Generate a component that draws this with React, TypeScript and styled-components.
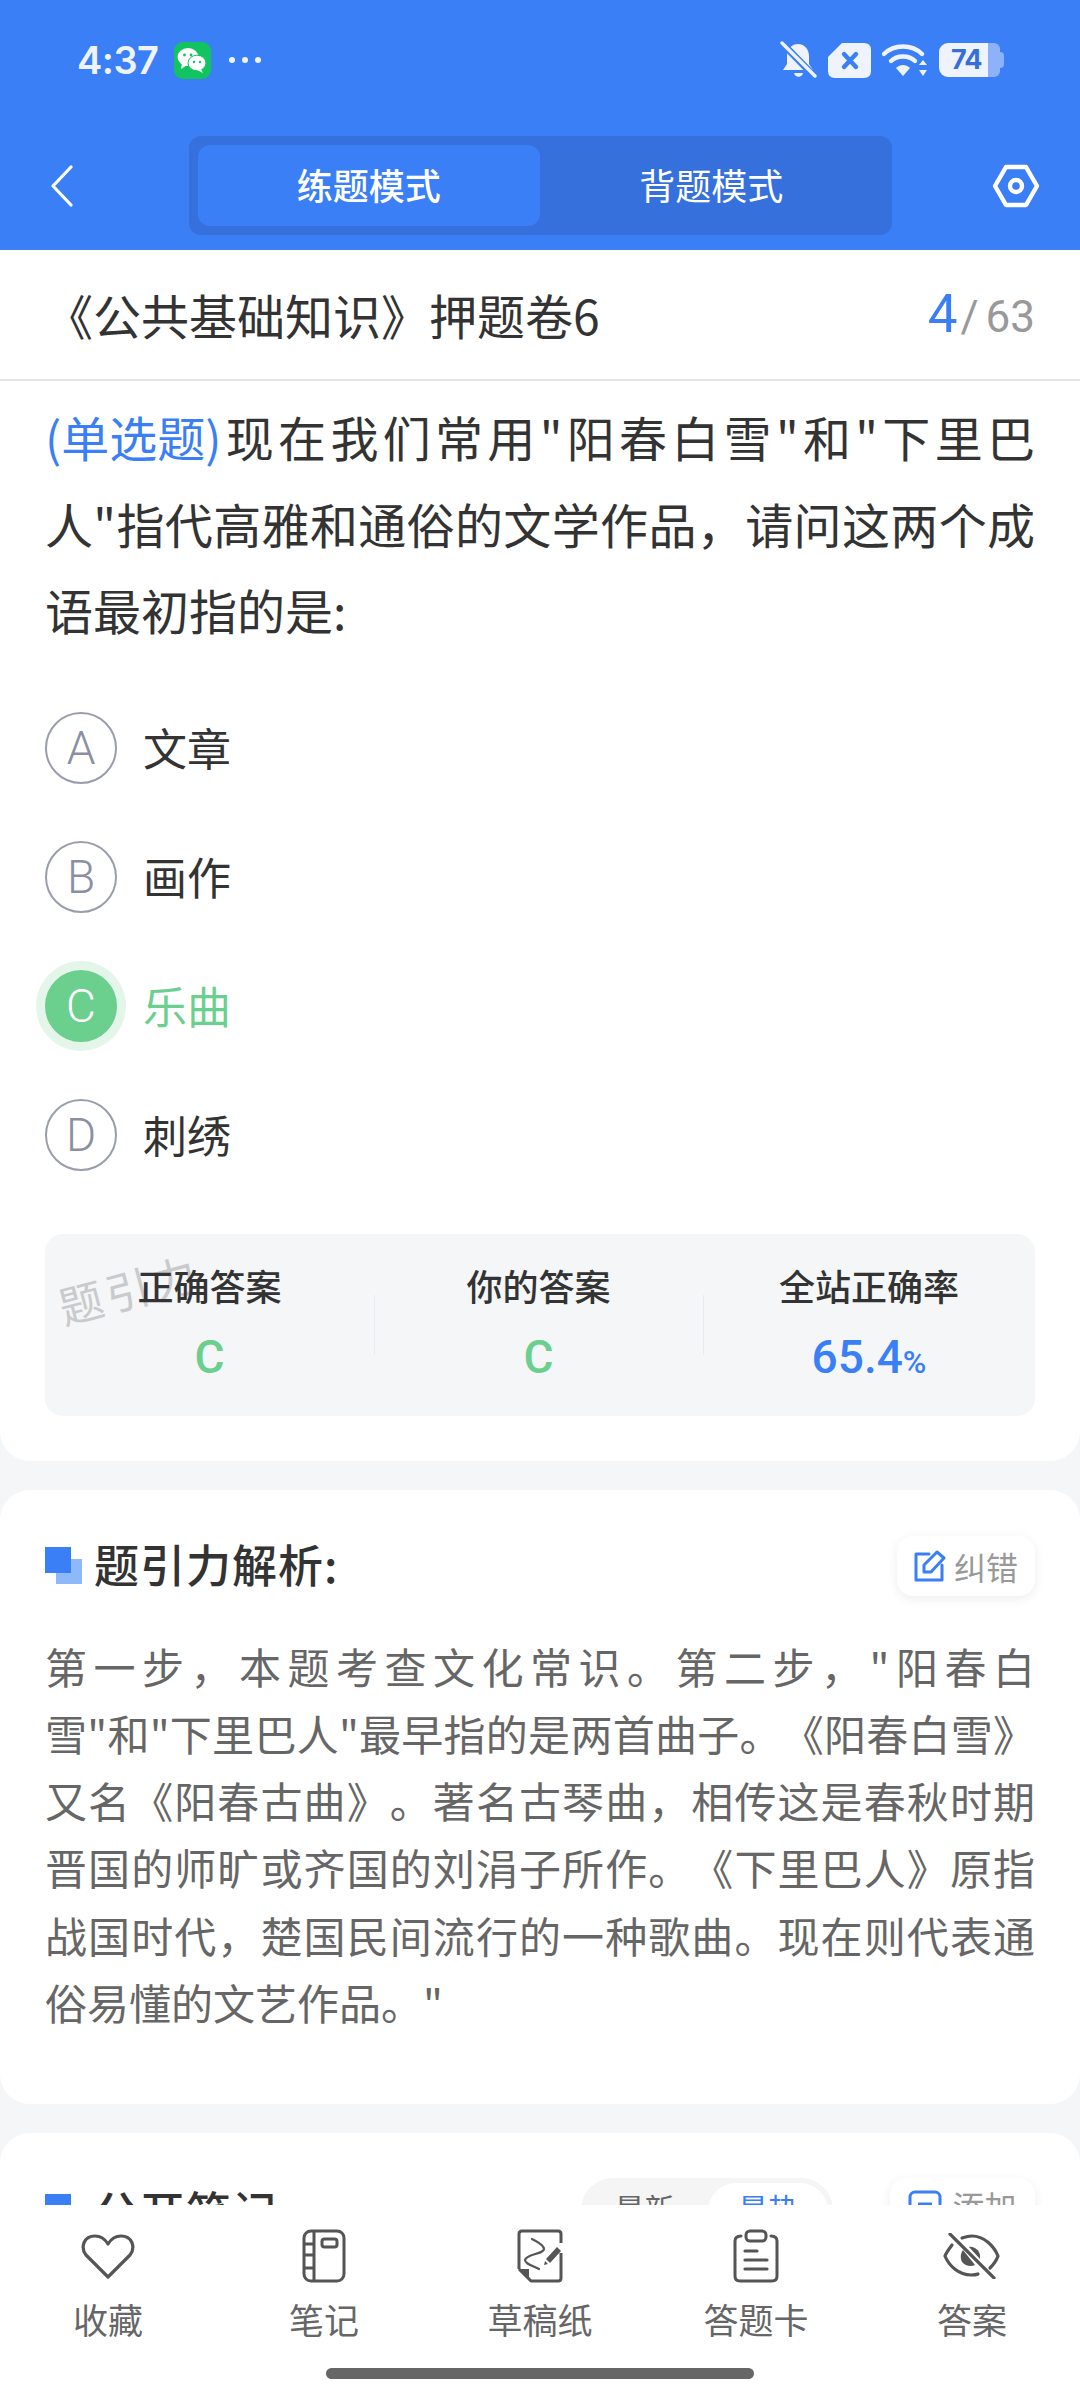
import styled, { createGlobalStyle } from "styled-components";

const BLUE = "#3b7ff7";
const GREEN = "#6bcf8e";
const PAGE = "#f4f6f8";
const ICON = "#555555";

const GlobalStyle = createGlobalStyle`
  html, body {
    margin: 0;
    padding: 0;
    background: ${PAGE};
  }
  body {
    font-family: "Noto Sans CJK SC", "Noto Sans", sans-serif;
    text-spacing-trim: space-all;
  }
  * {
    box-sizing: border-box;
  }
`;

const options = [
  { key: "A", text: "文章", picked: false },
  { key: "B", text: "画作", picked: false },
  { key: "C", text: "乐曲", picked: true },
  { key: "D", text: "刺绣", picked: false },
];

const analysisLines = [
  '第一步，本题考查文化常识。第二步，"阳春白',
  '雪"和"下里巴人"最早指的是两首曲子。《阳春白雪》',
  "又名《阳春古曲》。著名古琴曲，相传这是春秋时期",
  "晋国的师旷或齐国的刘涓子所作。《下里巴人》原指",
  "战国时代，楚国民间流行的一种歌曲。现在则代表通",
];

const HeartIcon = () => (
  <svg width="54" height="47" viewBox="0 0 54 47" fill="none" stroke={ICON} strokeWidth="3.2" strokeLinejoin="round">
    <path d="M27 44 L5 22 C-1 14 3 3 14 3 C20 3 24 6 27 11 C30 6 34 3 40 3 C51 3 55 14 49 22 Z" />
  </svg>
);

const NotebookIcon = () => (
  <svg width="44" height="54" viewBox="0 0 44 54" fill="none" stroke={ICON} strokeWidth="3" strokeLinejoin="round">
    <rect x="2" y="2" width="40" height="50" rx="7" />
    <path d="M12 2 V52 M2 15 H12 M2 26 H12 M2 39 H12" />
    <rect x="20" y="10" width="15" height="8" rx="2.5" />
  </svg>
);

const DraftIcon = () => (
  <svg width="46" height="54" viewBox="0 0 46 54" fill="none" stroke={ICON} strokeWidth="3" strokeLinejoin="round">
    <path d="M2 40 V5 Q2 2 5 2 H41 Q44 2 44 5 V14 M44 24 V49 Q44 52 41 52 H14 L2 40" />
    <path d="M2 40 H12 V50 Z" fill={ICON} stroke="none" />
    <path d="M15 10 C21 13 27 17 27 20 C27 25 9 25 8 31 C8 35 16 37 22 40" strokeWidth="2.2" strokeLinecap="round" />
    <path d="M29 30 L40 18 L44 22 L33 34 Z M27 36 L28 32 L31 35 Z" fill={ICON} stroke="none" />
  </svg>
);

const ClipboardIcon = () => (
  <svg width="46" height="54" viewBox="0 0 46 54" fill="none" stroke={ICON} strokeWidth="3" strokeLinecap="round" strokeLinejoin="round">
    <path d="M8 7 Q2 7 2 12 V47 Q2 52 7 52 H39 Q44 52 44 47 V12 Q44 7 38 7" />
    <rect x="13" y="2" width="20" height="10" rx="4" />
    <path d="M12 22 H24 M12 31 H34 M12 40 H34" strokeWidth="3.2" />
  </svg>
);

const EyeOffIcon = () => (
  <svg width="58" height="46" viewBox="0 0 58 46" fill="none" stroke={ICON} strokeWidth="3.2" strokeLinecap="round">
    <path d="M9 12 C6 16 3 20 2 23 C6 33 16 42 28 42 C31 42 33 42 35 41" />
    <path d="M19 5 C22 4 25 3 29 3 C41 3 51 13 55 23 C54 26 51 31 47 35" />
    <path d="M7 1 L51 45" />
    <path d="M20 17 C17 21 17 27 20 30 C23 33 28 34 32 32 Z" fill={ICON} stroke="none" />
    <path d="M26 14 C31 13 36 17 37 22 L37 26 Z" fill={ICON} stroke="none" />
  </svg>
);

const tools = [
  { label: "收藏", icon: <HeartIcon /> },
  { label: "笔记", icon: <NotebookIcon /> },
  { label: "草稿纸", icon: <DraftIcon /> },
  { label: "答题卡", icon: <ClipboardIcon /> },
  { label: "答案", icon: <EyeOffIcon /> },
];

export default function App() {
  return (
    <>
      <GlobalStyle />
      <Screen>
        <Header>
          <StatusBar>
            <StatusLeft>
              <Time>4:37</Time>
              <WeChatBadge>
                <svg width="30" height="26" viewBox="0 0 30 26">
                  <ellipse cx="11" cy="10" rx="10.5" ry="9" fill="#fff" />
                  <path d="M5 16 L4 22 L10 18 Z" fill="#fff" />
                  <ellipse cx="20" cy="16" rx="9" ry="7.8" fill="#fff" stroke="#12c45f" strokeWidth="1" />
                  <path d="M24 22 L26 26 L20 23 Z" fill="#fff" />
                  <circle cx="7.5" cy="8" r="1.4" fill="#12c45f" />
                  <circle cx="14" cy="8" r="1.4" fill="#12c45f" />
                  <circle cx="17" cy="15" r="1.2" fill="#12c45f" />
                  <circle cx="23" cy="15" r="1.2" fill="#12c45f" />
                </svg>
              </WeChatBadge>
              <Dots>
                <i />
                <i />
                <i />
              </Dots>
            </StatusLeft>
            <StatusRight>
              <svg width="37" height="38" viewBox="0 0 37 38" fill="none">
                <path d="M18 3 C25 3 29 9 29 15 V23 L33 29 H3 L7 23 V15 C7 9 11 3 18 3 Z" fill="#eef3fe" />
                <path d="M14 32 H23 C22 37 15 37 14 32 Z" fill="#eef3fe" />
                <path d="M1 1 L36 37" stroke={BLUE} strokeWidth="7" />
                <path d="M2 2 L35 35" stroke="#eef3fe" strokeWidth="3.4" strokeLinecap="round" />
              </svg>
              <svg width="43" height="35" viewBox="0 0 43 35">
                <path d="M14 0 H36 Q43 0 43 7 V28 Q43 35 36 35 H7 Q0 35 0 28 V14 Z" fill="#eef3fe" />
                <path d="M16 11 L28 24 M28 11 L16 24" stroke={BLUE} strokeWidth="4.4" strokeLinecap="round" />
              </svg>
              <svg width="46" height="34" viewBox="0 0 46 34" fill="none" stroke="#eef3fe" strokeLinecap="round">
                <path d="M2 11 C12 1 30 1 40 11" strokeWidth="4.4" />
                <path d="M9 18 C15 12 27 12 33 18" strokeWidth="4.4" />
                <path d="M14 25 L21 33 L28 25 C24 21 18 21 14 25 Z" fill="#eef3fe" stroke="none" />
                <path d="M37 22 L41 17 L45 22 Z M37 27 L45 27 L41 33 Z" fill="#eef3fe" stroke="none" />
              </svg>
              <Battery>
                <BatteryBody>74</BatteryBody>
                <BatteryCap />
              </Battery>
            </StatusRight>
          </StatusBar>
          <NavBar>
            <svg width="24" height="42" viewBox="0 0 24 42" fill="none" stroke="#fff" strokeWidth="3.2" strokeLinecap="round" strokeLinejoin="round">
              <path d="M21 2 L3 21 L21 40" />
            </svg>
            <ModeSwitch>
              <ModeTab $active>练题模式</ModeTab>
              <ModeTab>背题模式</ModeTab>
            </ModeSwitch>
            <svg width="48" height="44" viewBox="0 0 48 44" fill="none" stroke="#fff" strokeWidth="4.4" strokeLinejoin="round">
              <path d="M14 3 H34 L45 22 L34 41 H14 L3 22 Z" />
              <circle cx="24" cy="22" r="6" />
            </svg>
          </NavBar>
        </Header>

        <Scroller>
          <QuestionCard>
            <TitleRow>
              <PaperTitle>《公共基础知识》押题卷6</PaperTitle>
              <Counter>
                <CurrentNo>4</CurrentNo>
                <Total>/ 63</Total>
              </Counter>
            </TitleRow>
            <Stem>
              <FullLine>
                <StemType>(单选题)</StemType>现在我们常用"阳春白雪"和"下里巴
              </FullLine>
              <FullLine>人"指代高雅和通俗的文学作品，请问这两个成</FullLine>
              语最初指的是:
            </Stem>
            <OptionList>
              {options.map((o) => (
                <OptionRow key={o.key}>
                  <OptionMark $picked={o.picked}>{o.key}</OptionMark>
                  <OptionText $picked={o.picked}>{o.text}</OptionText>
                </OptionRow>
              ))}
            </OptionList>
            <StatsPanel>
              <Watermark>题引力</Watermark>
              <StatCell>
                <StatLabel>正确答案</StatLabel>
                <StatValue>C</StatValue>
              </StatCell>
              <StatCell $divided>
                <StatLabel>你的答案</StatLabel>
                <StatValue>C</StatValue>
              </StatCell>
              <StatCell $divided>
                <StatLabel>全站正确率</StatLabel>
                <StatValue $blue>
                  65.4<small>%</small>
                </StatValue>
              </StatCell>
            </StatsPanel>
          </QuestionCard>

          <AnalysisCard>
            <SectionHead>
              <SectionTitle>
                <Squares />
                <TitleText>题引力解析:</TitleText>
              </SectionTitle>
              <GhostButton>
                <svg width="32" height="32" viewBox="0 0 32 32" fill="none" stroke={BLUE} strokeWidth="3" strokeLinecap="round" strokeLinejoin="round">
                  <path d="M15 4 H2 V30 H28 V15" />
                  <path d="M10 22 V15 L23 2 L30 8 L17 22 Z" />
                </svg>
                纠错
              </GhostButton>
            </SectionHead>
            <AnalysisText>
              {analysisLines.map((line) => (
                <FullLine key={line}>{line}</FullLine>
              ))}
              俗易懂的文艺作品。"
            </AnalysisText>
          </AnalysisCard>

          <NotesCard>
            <NotesHead>
              <SectionTitle>
                <Squares />
                <TitleText>公开笔记:</TitleText>
              </SectionTitle>
              <NotesActions>
                <SortSwitch>
                  <SortTab>最新</SortTab>
                  <SortTab $active>最热</SortTab>
                </SortSwitch>
                <AddButton>
                  <svg width="34" height="30" viewBox="0 0 34 30" fill="none" stroke={BLUE} strokeWidth="3">
                    <rect x="2" y="2" width="30" height="26" rx="5" />
                    <path d="M10 14 H24" />
                  </svg>
                  添加
                </AddButton>
              </NotesActions>
            </NotesHead>
          </NotesCard>
        </Scroller>

        <BottomBar>
          <ToolRow>
            {tools.map((t) => (
              <Tool key={t.label}>
                <ToolIcon>{t.icon}</ToolIcon>
                <ToolLabel>{t.label}</ToolLabel>
              </Tool>
            ))}
          </ToolRow>
          <HomeIndicator />
        </BottomBar>
      </Screen>
    </>
  );
}

const Screen = styled.div`
  width: 1080px;
  height: 2400px;
  display: flex;
  flex-direction: column;
  overflow: hidden;
  background: ${PAGE};
`;

const Header = styled.header`
  height: 250px;
  flex: none;
  background: ${BLUE};
`;

const StatusBar = styled.div`
  height: 136px;
  padding: 38px 76px 0 77px;
  display: flex;
  justify-content: space-between;
  align-items: flex-start;
`;

const StatusLeft = styled.div`
  display: flex;
  align-items: center;
  height: 44px;
`;

const Time = styled.span`
  font-family: Inter, sans-serif;
  font-size: 38px;
  font-weight: 600;
  letter-spacing: -0.5px;
  color: #eef3fe;
`;

const WeChatBadge = styled.span`
  width: 37px;
  height: 37px;
  margin-left: 15px;
  border-radius: 9px;
  background: #12c45f;
  display: flex;
  align-items: center;
  justify-content: center;
`;

const Dots = styled.span`
  display: flex;
  gap: 7px;
  margin-left: 18px;

  i {
    width: 6px;
    height: 6px;
    border-radius: 50%;
    background: #eef3fe;
  }
`;

const StatusRight = styled.div`
  display: flex;
  align-items: center;
  gap: 11px;
  height: 44px;
`;

const Battery = styled.div`
  display: flex;
  align-items: center;
`;

const BatteryBody = styled.div`
  width: 61px;
  height: 34px;
  border-radius: 9px 6px 6px 9px;
  padding-left: 12px;
  background: linear-gradient(to right, #eef3fe 49px, #8db2fa 49px);
  font-family: Inter, sans-serif;
  font-size: 27px;
  font-weight: 700;
  line-height: 34px;
  letter-spacing: -1px;
  color: #3570d8;
`;

const BatteryCap = styled.div`
  width: 4px;
  height: 16px;
  border-radius: 0 4px 4px 0;
  background: #8db2fa;
`;

const NavBar = styled.div`
  height: 99px;
  padding: 0 40px 0 50px;
  display: flex;
  align-items: center;
  justify-content: space-between;
`;

const ModeSwitch = styled.div`
  width: 703px;
  height: 99px;
  padding: 9px;
  margin-left: 14px;
  border-radius: 12px;
  background: #3670dc;
  display: flex;
`;

const ModeTab = styled.div<{ $active?: boolean }>`
  flex: 1;
  display: flex;
  align-items: center;
  justify-content: center;
  padding-bottom: 4px;
  border-radius: 12px;
  background: ${({ $active }) => ($active ? BLUE : "transparent")};
  color: #fff;
  font-size: 36px;
  font-weight: ${({ $active }) => ($active ? 500 : 400)};
`;

const Scroller = styled.main`
  flex: 1;
  min-height: 0;
  overflow: hidden;
  display: flex;
  flex-direction: column;
  gap: 29px;
`;

const QuestionCard = styled.section`
  flex: none;
  background: #fff;
  border-radius: 0 0 30px 30px;
  padding-bottom: 45px;
`;

const TitleRow = styled.div`
  height: 131px;
  padding: 0 45px 2px;
  display: flex;
  align-items: center;
  justify-content: space-between;
  border-bottom: 2px solid #e4e4e4;
`;

const PaperTitle = styled.h1`
  margin: 0;
  font-size: 48px;
  font-weight: 400;
  color: #333;
`;

const Counter = styled.div`
  display: flex;
  align-items: baseline;
  font-family: Roboto, sans-serif;
`;

const CurrentNo = styled.span`
  font-size: 53px;
  font-weight: 400;
  color: ${BLUE};
`;

const Total = styled.span`
  margin-left: 3px;
  font-size: 44px;
  word-spacing: -4px;
  color: #999;
`;

const Stem = styled.div`
  margin: 12px 45px 0;
  font-size: 48px;
  line-height: 86.5px;
  color: #333;
`;

const FullLine = styled.span`
  display: block;
  text-align: justify;
  text-align-last: justify;
`;

const StemType = styled.span`
  display: inline-block;
  color: ${BLUE};
`;

const OptionList = styled.div`
  margin: 31px 45px 0;
`;

const OptionRow = styled.div`
  height: 129px;
  display: flex;
  align-items: center;
  gap: 26px;
`;

const OptionMark = styled.div<{ $picked?: boolean }>`
  width: 72px;
  height: 72px;
  flex: none;
  border-radius: 50%;
  display: flex;
  align-items: center;
  justify-content: center;
  font-family: Roboto, sans-serif;
  font-size: 46px;
  font-weight: 300;
  border: 2px solid ${({ $picked }) => ($picked ? GREEN : "#9a9dac")};
  color: ${({ $picked }) => ($picked ? "#fff" : "#8b8fa3")};
  background: ${({ $picked }) => ($picked ? GREEN : "transparent")};
  box-shadow: ${({ $picked }) => ($picked ? "0 0 0 9px #e4f6ea" : "none")};
`;

const OptionText = styled.div<{ $picked?: boolean }>`
  margin-bottom: 3px;
  font-size: 44px;
  color: ${({ $picked }) => ($picked ? GREEN : "#333")};
`;

const StatsPanel = styled.div`
  position: relative;
  height: 182px;
  margin: 34px 45px 0;
  border-radius: 18px;
  background: ${PAGE};
  display: grid;
  grid-template-columns: 329px 329px 332px;
`;

const Watermark = styled.div`
  position: absolute;
  left: 12px;
  top: 22px;
  font-size: 44px;
  letter-spacing: 4px;
  color: #c9cacc;
  transform: rotate(-15deg);
`;

const StatCell = styled.div<{ $divided?: boolean }>`
  position: relative;
  padding-top: 26px;
  display: flex;
  flex-direction: column;
  align-items: center;
  gap: 20px;

  &::before {
    content: "";
    display: ${({ $divided }) => ($divided ? "block" : "none")};
    position: absolute;
    left: 0;
    top: 61px;
    height: 60px;
    width: 1px;
    background: #e9ebee;
  }
`;

const StatLabel = styled.div`
  position: relative;
  font-size: 36px;
  font-weight: 500;
  line-height: 50px;
  color: #333;
`;

const StatValue = styled.div<{ $blue?: boolean }>`
  font-family: Roboto, sans-serif;
  font-size: 46px;
  font-weight: 500;
  line-height: 54px;
  color: ${({ $blue }) => ($blue ? BLUE : GREEN)};

  small {
    font-size: 32px;
  }
`;

const AnalysisCard = styled.section`
  flex: none;
  height: 614px;
  padding: 46px 45px 0;
  border-radius: 30px;
  background: #fff;
`;

const SectionHead = styled.div`
  height: 60px;
  display: flex;
  align-items: center;
  justify-content: space-between;
`;

const SectionTitle = styled.h2`
  margin: 0;
  display: flex;
  align-items: center;
  font-size: 45px;
  font-weight: 500;
  letter-spacing: 1px;
  color: #333;
`;

const TitleText = styled.span`
  margin-bottom: 4px;
`;

const Squares = styled.span`
  position: relative;
  width: 37px;
  height: 37px;
  margin-right: 12px;
  flex: none;
  background: linear-gradient(#8db9fa, #8db9fa) 11px 12px / 26px 25px no-repeat;

  &::before {
    content: "";
    position: absolute;
    left: 0;
    top: 0;
    width: 26px;
    height: 26px;
    background: ${BLUE};
  }
`;

const GhostButton = styled.div`
  width: 138px;
  height: 60px;
  border-radius: 16px;
  background: #fff;
  box-shadow: 0 3px 12px rgba(0, 0, 0, 0.07);
  display: flex;
  align-items: center;
  justify-content: center;
  gap: 8px;
  font-size: 32px;
  color: #999;
`;

const AnalysisText = styled.div`
  margin-top: 36px;
  font-size: 42px;
  line-height: 67.3px;
  color: #666;
`;

const NotesCard = styled.section`
  flex: none;
  height: 300px;
  padding: 45px 45px 0;
  border-radius: 30px;
  background: #fff;
`;

const NotesHead = styled.div`
  display: flex;
  align-items: flex-start;
  justify-content: space-between;
`;

const NotesActions = styled.div`
  display: flex;
  gap: 57px;
`;

const SortSwitch = styled.div`
  width: 252px;
  height: 64px;
  padding: 5px 5px 0 0;
  border-radius: 32px;
  background: #f5f5f5;
  display: flex;
`;

const SortTab = styled.div<{ $active?: boolean }>`
  display: flex;
  flex: ${({ $active }) => ($active ? "none" : "1")};
  width: ${({ $active }) => ($active ? "120px" : "auto")};
  align-items: center;
  justify-content: center;
  padding-bottom: 10px;
  border-radius: 28px;
  font-size: 30px;
  background: ${({ $active }) => ($active ? "#fff" : "transparent")};
  color: ${({ $active }) => ($active ? BLUE : "#666")};
`;

const AddButton = styled.div`
  width: 145px;
  height: 62px;
  padding-bottom: 8px;
  border-radius: 16px;
  background: #fff;
  box-shadow: 0 3px 12px rgba(0, 0, 0, 0.07);
  display: flex;
  align-items: center;
  justify-content: center;
  gap: 10px;
  font-size: 32px;
  color: #999;
`;

const BottomBar = styled.nav`
  height: 195px;
  flex: none;
  background: #fff;
  position: relative;
`;

const ToolRow = styled.div`
  display: grid;
  grid-template-columns: repeat(5, 216px);
`;

const Tool = styled.div`
  display: flex;
  flex-direction: column;
  align-items: center;
`;

const ToolIcon = styled.div`
  height: 54px;
  margin-top: 24px;
  display: flex;
  align-items: center;
  justify-content: center;
`;

const ToolLabel = styled.div`
  margin-top: 11px;
  font-size: 35px;
  line-height: 50px;
  color: #666;
`;

const HomeIndicator = styled.div`
  position: absolute;
  left: 326px;
  bottom: 21px;
  width: 428px;
  height: 11px;
  border-radius: 6px;
  background: #666;
`;
